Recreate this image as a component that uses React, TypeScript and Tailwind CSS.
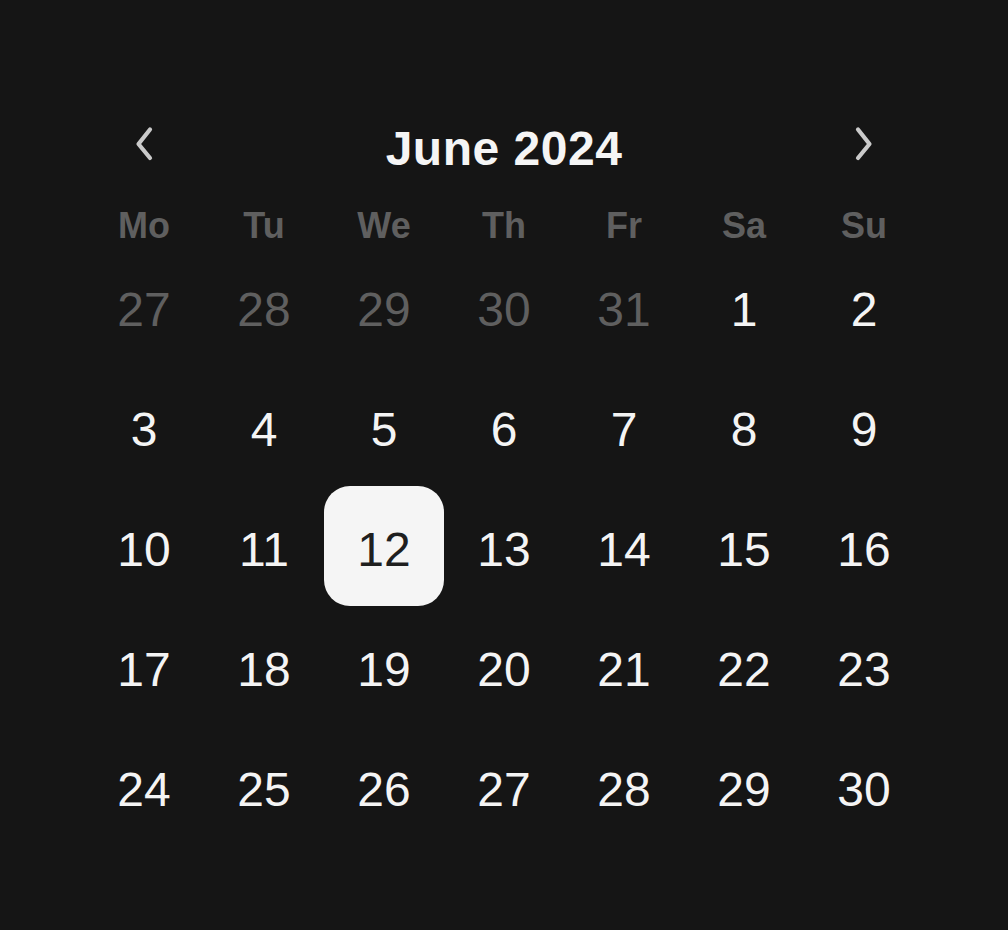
import React from "react";

const weekdays = ["Mo", "Tu", "We", "Th", "Fr", "Sa", "Su"];

type Day = { n: number; muted?: boolean; selected?: boolean };

const days: Day[] = [
  { n: 27, muted: true },
  { n: 28, muted: true },
  { n: 29, muted: true },
  { n: 30, muted: true },
  { n: 31, muted: true },
  ...Array.from({ length: 30 }, (_, i) => ({ n: i + 1, selected: i + 1 === 12 })),
];

function ChevronLeft() {
  return (
    <svg width="40" height="40" viewBox="0 0 40 40" fill="none">
      <path d="M26 5.5 L14.5 20 L26 34" stroke="#cacaca" strokeWidth="4.2" strokeLinecap="round" strokeLinejoin="round" />
    </svg>
  );
}

function ChevronRight() {
  return (
    <svg width="40" height="40" viewBox="0 0 40 40" fill="none">
      <path d="M14 5.5 L25.5 20 L14 34" stroke="#cacaca" strokeWidth="4.2" strokeLinecap="round" strokeLinejoin="round" />
    </svg>
  );
}

export default function App() {
  return (
    <div
      className="min-h-[930px] w-full bg-[#151515] pt-[104px]"
      style={{ fontFamily: '"Liberation Sans", Arial, sans-serif' }}
    >
      <div className="mx-auto w-[840px]">
        <div className="flex h-[80px] items-center">
          <button className="flex h-[80px] w-[120px] items-center justify-center">
            <ChevronLeft />
          </button>
          <div className="flex h-[80px] flex-1 justify-center pt-[21px]">
            <span className="text-[48px] font-bold leading-none tracking-[0.5px] text-[#f5f5f5]">
              June 2024
            </span>
          </div>
          <button className="flex h-[80px] w-[120px] items-center justify-center">
            <ChevronRight />
          </button>
        </div>
        <div className="grid h-[62px] grid-cols-7">
          {weekdays.map((w) => (
            <div key={w} className="pt-[24px] text-center text-[36px] font-bold leading-none text-[#5f5f5f]">
              {w}
            </div>
          ))}
        </div>
        <div className="grid grid-cols-7">
          {days.map((d, i) => (
            <div
              key={i}
              className={
                d.selected
                  ? "h-[120px] rounded-[26px] bg-[#f5f5f5] pt-[40px] text-center text-[48px] leading-none text-[#1f1f1f]"
                  : d.muted
                  ? "h-[120px] pt-[40px] text-center text-[48px] leading-none text-[#5f5f5f]"
                  : "h-[120px] pt-[40px] text-center text-[48px] leading-none text-[#f4f4f4]"
              }
            >
              {d.n}
            </div>
          ))}
        </div>
      </div>
    </div>
  );
}
